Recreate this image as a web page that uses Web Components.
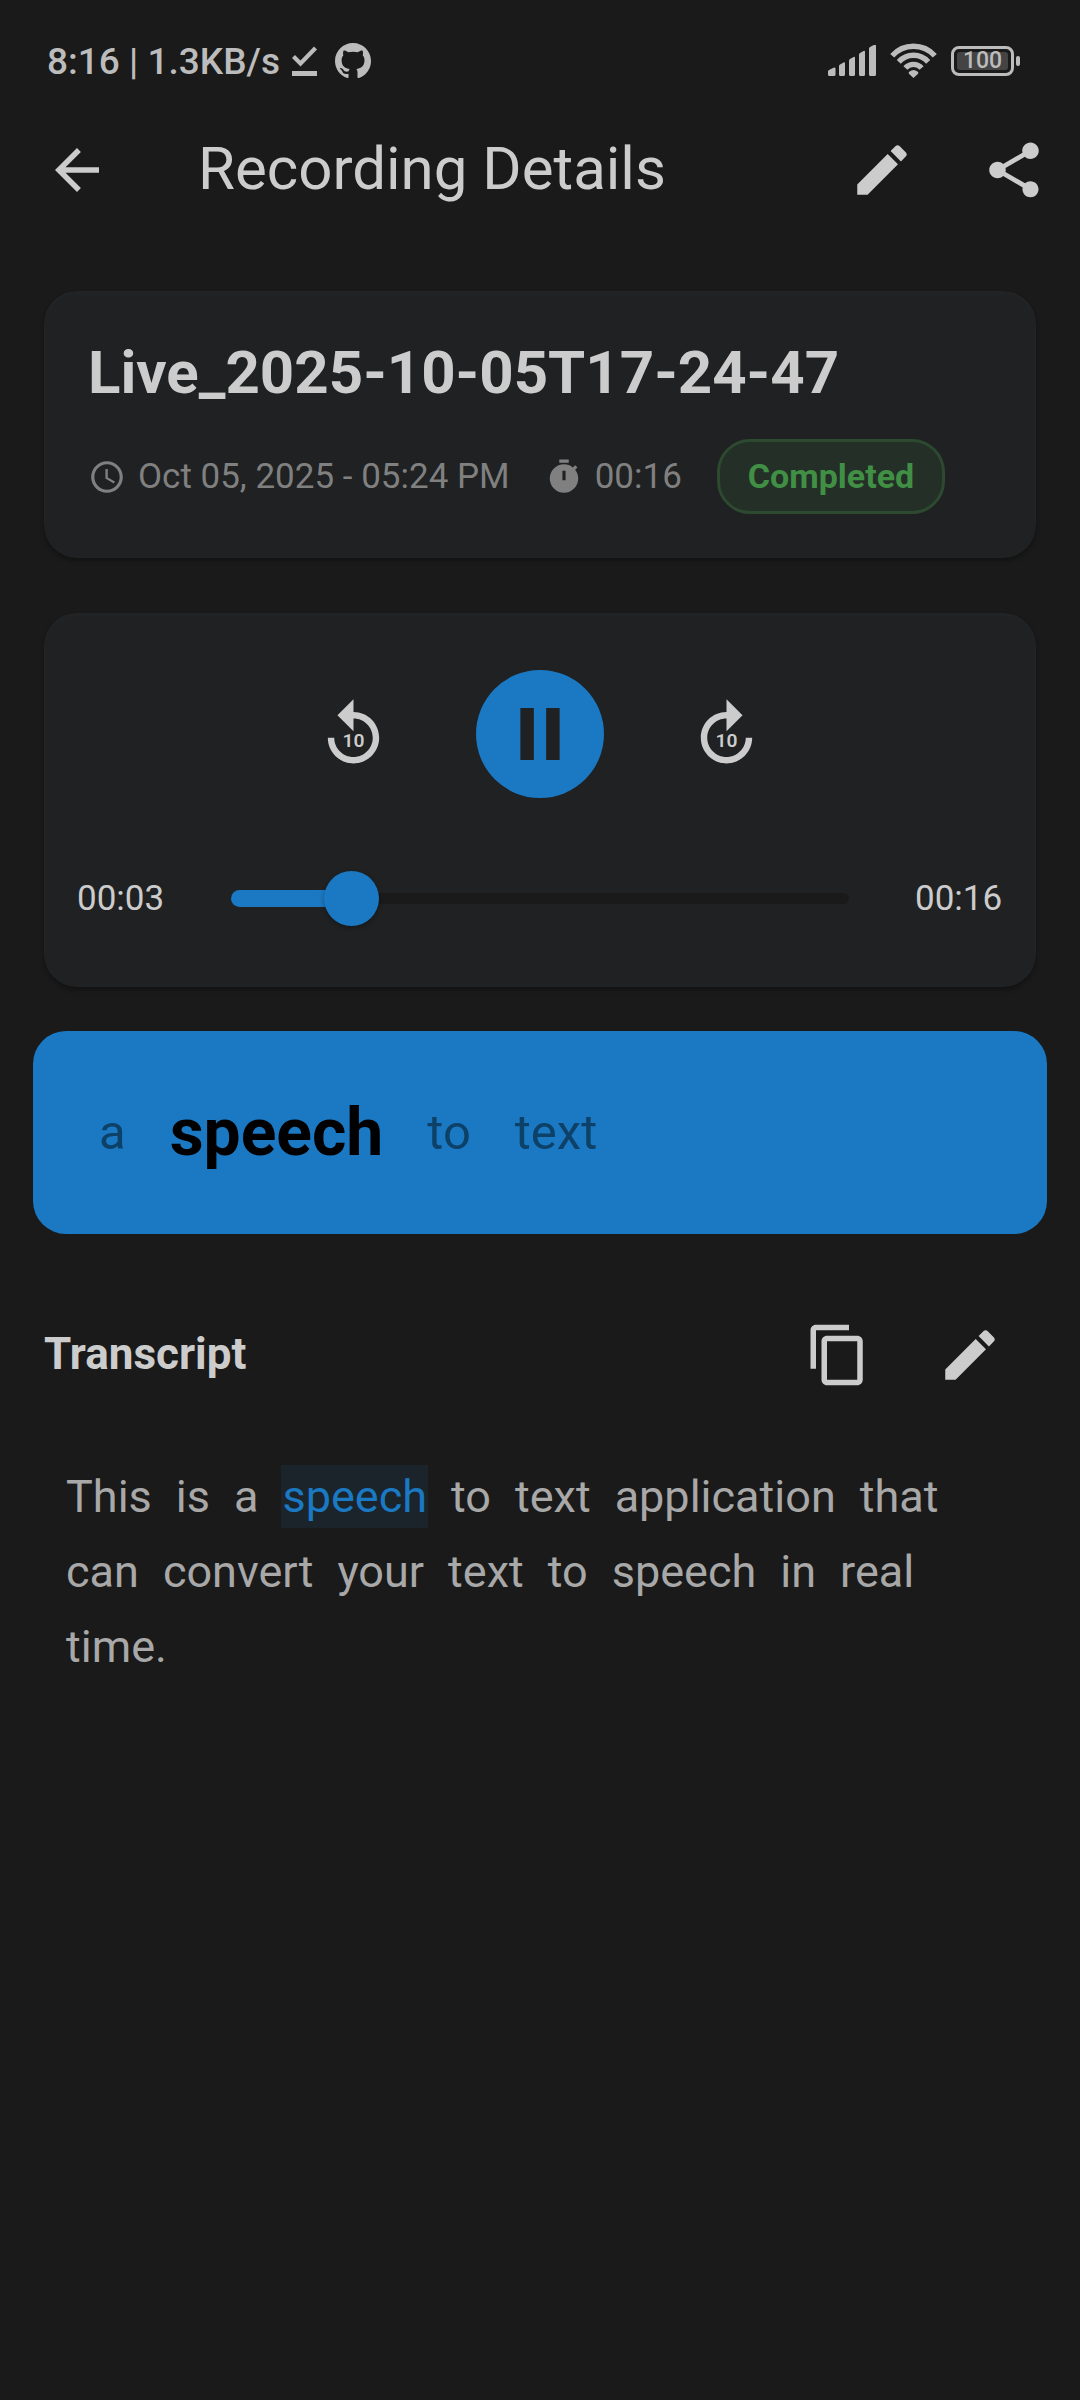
<!DOCTYPE html>
<html lang="en">
<head>
<meta charset="utf-8">
<meta name="viewport" content="width=device-width, initial-scale=1">
<title>Recording Details</title>
<style>
  :root {
    --bg: #1a1a1a;
    --surface: #1f2122;
    --accent: #1b78c2;
    --text: #cccccc;
    --muted: #808080;
  }
  body {
    margin: 0;
    min-height: 100vh;
    background: var(--bg);
    color: var(--text);
    font-family: Roboto, "Liberation Sans", sans-serif;
  }
</style>
</head>
<body>
<recording-page></recording-page>

<script>
const define = (name, html, setup) => {
  const template = document.createElement('template');
  template.innerHTML = html;
  customElements.define(name, class extends HTMLElement {
    connectedCallback() {
      if (this.shadowRoot) return;
      this.attachShadow({ mode: 'open' }).append(template.content.cloneNode(true));
      if (setup) setup(this, this.shadowRoot);
    }
  });
};

const ICONS = {
  back: '<path d="M20 11H7.83l5.59-5.59L12 4l-8 8 8 8 1.41-1.41L7.83 13H20v-2z"/>',
  edit: '<path d="M3 17.25V21h3.75L17.81 9.94l-3.75-3.75L3 17.25zM20.71 7.04c.39-.39.39-1.02 0-1.41l-2.34-2.34c-.39-.39-1.02-.39-1.41 0l-1.83 1.83 3.75 3.75 1.83-1.83z"/>',
  share: '<path d="M18 16.08c-.76 0-1.44.3-1.96.77L8.91 12.7c.05-.23.09-.46.09-.7s-.04-.47-.09-.7l7.05-4.11c.54.5 1.25.81 2.04.81 1.66 0 3-1.34 3-3s-1.34-3-3-3-3 1.34-3 3c0 .24.04.47.09.7L8.04 9.81C7.5 9.31 6.79 9 6 9c-1.66 0-3 1.34-3 3s1.34 3 3 3c.79 0 1.5-.31 2.04-.81l7.12 4.16c-.05.21-.08.43-.08.65 0 1.61 1.31 2.92 2.92 2.92s2.92-1.31 2.92-2.92-1.31-2.92-2.92-2.92z"/>',
  copy: '<path d="M16 1H4c-1.1 0-2 .9-2 2v14h2V3h12V1zm3 4H8c-1.1 0-2 .9-2 2v14c0 1.1.9 2 2 2h11c1.1 0 2-.9 2-2V7c0-1.1-.9-2-2-2zm0 16H8V7h11v14z"/>',
  clock: '<path d="M11.99 2C6.47 2 2 6.48 2 12s4.47 10 9.99 10C17.52 22 22 17.52 22 12S17.52 2 11.99 2zM12 20c-4.42 0-8-3.58-8-8s3.58-8 8-8 8 3.58 8 8-3.58 8-8 8z"/><path d="M12.5 7H11v6l5.25 3.15.75-1.23-4.5-2.67z"/>',
  timer: '<path fill-rule="evenodd" d="M15 1H9v2h6V1zm-4 13h2V8h-2v6zm8.03-6.61l1.42-1.42c-.43-.51-.9-.99-1.41-1.41l-1.42 1.42C16.07 4.74 14.12 4 12 4c-4.97 0-9 4.03-9 9s4.02 9 9 9 9-4.03 9-9c0-2.12-.74-4.07-1.97-5.61z"/>',
  pause: '<path d="M6.650 19.100h3.670V4.900H6.650v14.200zM13.680 4.900v14.200h3.670V4.900h-3.670z"/>',
  replay: '<path d="M12 5V1L7 6l5 5V7c3.31 0 6 2.69 6 6s-2.69 6-6 6-6-2.69-6-6H4c0 4.42 3.58 8 8 8s8-3.58 8-8-3.58-8-8-8z"/><text x="12" y="16" font-size="6" font-weight="600" text-anchor="middle">10</text>',
  forward: '<path d="M12 5V1l5 5-5 5V7c-3.31 0-6 2.69-6 6s2.69 6 6 6 6-2.69 6-6h2c0 4.42-3.58 8-8 8s-8-3.58-8-8 3.58-8 8-8z"/><text x="12" y="16" font-size="6" font-weight="600" text-anchor="middle">10</text>'
};

define('app-icon', `
  <style>
    :host { display: block; flex: none; width: var(--icon-size, 66px); height: var(--icon-size, 66px); }
    svg { display: block; width: 100%; height: 100%; fill: currentColor; }
  </style>
  <svg viewBox="0 0 24 24" aria-hidden="true"></svg>
`, (host, root) => { root.querySelector('svg').innerHTML = ICONS[host.getAttribute('name')]; });

define('icon-button', `
  <style>
    :host { display: block; flex: none; }
    button {
      display: grid; place-items: center;
      width: var(--button-size, 132px); height: var(--button-size, 132px);
      margin: 0; padding: 0; border: 0; border-radius: 50%;
      background: var(--button-bg, transparent); color: inherit; font: inherit; cursor: pointer;
    }
  </style>
  <button type="button"><slot></slot></button>
`, (host, root) => root.querySelector('button').setAttribute('aria-label', host.getAttribute('label')));

define('status-bar', `
  <style>
    :host {
      display: flex; align-items: center; justify-content: space-between;
      height: 65px; padding: 28px 60px 0 47px;
      box-sizing: content-box; color: #bcbcbc;
      font-size: 37px; line-height: 44px; font-weight: 500;
    }
    div { display: flex; align-items: center; }
    .left { gap: 12px; }
    .left span { padding-top: 2px; }
    .right { gap: 14px; }
    svg { display: block; fill: currentColor; }
    .battery { display: flex; align-items: center; gap: 2px; }
    .cell {
      box-sizing: border-box; width: 63px; height: 30px; padding: 3px;
      border: 3px solid currentColor; border-radius: 8px;
    }
    .charge {
      flex: 1; height: 18px; justify-content: center; border-radius: 3px;
      background: #444; font-size: 23px; line-height: 18px;
    }
    .nub { width: 4px; height: 10px; border-radius: 2px; background: currentColor; }
  </style>
  <div class="left">
    <span>8:16 | 1.3KB/s</span>
    <svg width="31" height="30" viewBox="0 0 31 30" aria-hidden="true">
      <path d="M1.5 10.5 8.5 17.5 23.5 2" fill="none" stroke="currentColor" stroke-width="4.2"/>
      <path d="M0 25h25v5H0z"/>
    </svg>
    <svg width="36" height="36" viewBox="0 0 16 16" aria-hidden="true">
      <path d="M8 0C3.58 0 0 3.58 0 8c0 3.54 2.29 6.53 5.47 7.59.4.07.55-.17.55-.38 0-.19-.01-.82-.01-1.49-2.01.37-2.53-.49-2.69-.94-.09-.23-.48-.94-.82-1.13-.28-.15-.68-.52-.01-.53.63-.01 1.08.58 1.23.82.72 1.21 1.87.87 2.33.66.07-.52.28-.87.51-1.07-1.78-.2-3.64-.89-3.64-3.95 0-.87.31-1.59.82-2.15-.08-.2-.36-1.02.08-2.12 0 0 .67-.21 2.2.82.64-.18 1.32-.27 2-.27s1.36.09 2 .27c1.53-1.04 2.2-.82 2.2-.82.44 1.1.16 1.92.08 2.12.51.56.82 1.27.82 2.15 0 3.07-1.87 3.75-3.65 3.95.29.25.54.73.54 1.48 0 1.07-.01 1.93-.01 2.2 0 .21.15.46.55.38A8.01 8.01 0 0 0 16 8c0-4.42-3.58-8-8-8"/>
    </svg>
  </div>
  <div class="right">
    <svg width="48" height="31" viewBox="0 0 48 31" aria-hidden="true">
      <path d="M0 26.5q0-1 1-1.6l4.5-2.2q2-.6 2 1V29.500q0 1.500-1.500 1.500H1.500Q0 31 0 29.500zM11 21q0-1 1-1.600l3.500-2q1.500-.6 1.500 1V29.500q0 1.500-1.500 1.500h-3Q11 31 11 29.500zM21 15.500q0-1 1-1.600l3.500-2q1.500-.6 1.500 1V29.500q0 1.500-1.500 1.500h-3Q21 31 21 29.500zM31 9.500q0-1 1-1.600l3.500-2q1.500-.6 1.500 1V29.500q0 1.500-1.500 1.500h-3Q31 31 31 29.500zM41 3.500q0-1 1-1.600l4-2q2-.6 2 1V29.500q0 1.500-1.500 1.500h-4Q41 31 41 29.500z"/>
    </svg>
    <svg width="47" height="35" viewBox="0 0 47 35" aria-hidden="true">
      <g fill="none" stroke="currentColor" stroke-width="5.4">
        <path d="M2.200 12.800A28.600 28.600 0 0 1 44.800 12.800"/>
        <path d="M8.800 18.900A19.600 19.600 0 0 1 38.200 18.900"/>
        <path d="M15.400 25A10.800 10.800 0 0 1 31.600 25"/>
      </g>
      <path d="M23.500 35l-4.600-4.200q-.8-1.400.6-2.400 4-3 8 0 1.400 1 .6 2.400z"/>
    </svg>
    <div class="battery">
      <div class="cell"><div class="charge">100</div></div>
      <div class="nub"></div>
    </div>
  </div>
`);

define('app-bar', `
  <style>
    :host { display: flex; align-items: center; height: 154px; padding-left: 11px; }
    h1 { flex: 1; margin: 0 0 0 55px; padding-bottom: 3px; font-size: 60px; line-height: 77px; font-weight: 400; }
  </style>
  <icon-button label="Back"><app-icon name="back"></app-icon></icon-button>
  <h1><slot></slot></h1>
  <icon-button label="Edit"><app-icon name="edit"></app-icon></icon-button>
  <icon-button label="Share"><app-icon name="share"></app-icon></icon-button>
`);

define('surface-card', `
  <style>
    :host {
      display: block; border-radius: 33px; background: var(--surface);
      box-shadow: 0 3px 4px rgba(0,0,0,.3), inset 0 3px 6px rgba(255,255,255,.02), inset 0 0 4px rgba(255,255,255,.02);
    }
  </style>
  <slot></slot>
`);

define('recording-info', `
  <style>
    :host { display: block; padding: 44px; }
    h2 { margin: 0 0 29px; font-size: 60px; line-height: 75px; font-weight: 700; }
    .meta { display: flex; align-items: center; gap: 35px; color: var(--muted); font-size: 35px; line-height: 44px; }
    .item { display: flex; align-items: center; gap: 12px; --icon-size: 38px; }
    .chip {
      padding: 13px 28px; border: 3px solid #2d4a31; border-radius: 33px;
      background: #232f27; color: #418f45; font-size: 34px; font-weight: 700; line-height: 43px;
    }
  </style>
  <h2>Live_2025-10-05T17-24-47</h2>
  <div class="meta">
    <div class="item"><app-icon name="clock"></app-icon><span>Oct 05, 2025 - 05:24 PM</span></div>
    <div class="item"><app-icon name="timer"></app-icon><span>00:16</span></div>
    <div class="chip">Completed</div>
  </div>
`);

define('seek-slider', `
  <style>
    :host { display: grid; flex: 1; align-items: center; min-width: 0; }
    .rail, .fill, input { grid-area: 1 / 1; }
    .rail { height: 11px; border-radius: 6px; background: var(--bg); }
    .fill { height: 17px; width: 20%; border-radius: 9px; background: var(--accent); }
    input {
      appearance: none; width: 100%; height: 55px; margin: 0; background: transparent; cursor: pointer;
    }
    input::-webkit-slider-thumb {
      appearance: none; width: 55px; height: 55px; border-radius: 50%;
      background: var(--accent); box-shadow: 0 2px 5px rgba(0,0,0,.3);
    }
  </style>
  <div class="rail"></div>
  <div class="fill"></div>
  <input type="range" aria-label="Playback position" min="0" max="1000" value="166">
`, (host, root) => {
  const input = root.querySelector('input');
  const fill = root.querySelector('.fill');
  input.addEventListener('input', () => { fill.style.width = input.value / 10 + '%'; });
});

define('audio-player', `
  <style>
    :host { display: block; padding: 57px 33px 61px; }
    .controls { display: flex; align-items: center; justify-content: center; gap: 84px; margin-bottom: 73px; }
    .skip { --button-size: 77px; --icon-size: 77px; }
    .play { --button-size: 128px; --icon-size: 88px; --button-bg: var(--accent); color: var(--surface); }
    .seek { display: flex; align-items: center; gap: 66px; font-size: 35px; line-height: 44px; }
    .time { width: 88px; }
  </style>
  <div class="controls">
    <icon-button class="skip" label="Back 10 seconds"><app-icon name="replay"></app-icon></icon-button>
    <icon-button class="play" label="Pause"><app-icon name="pause"></app-icon></icon-button>
    <icon-button class="skip" label="Forward 10 seconds"><app-icon name="forward"></app-icon></icon-button>
  </div>
  <div class="seek">
    <span class="time">00:03</span>
    <seek-slider></seek-slider>
    <span class="time">00:16</span>
  </div>
`);

define('live-caption', `
  <style>
    :host {
      display: flex; align-items: center; gap: 44px; height: 203px;
      box-sizing: border-box; padding: 0 66px; border-radius: 33px;
      background: var(--accent); color: #0d4168; font-size: 49px; line-height: 66px;
    }
    strong { color: #000; font-size: 66px; font-weight: 700; }
  </style>
  <span>a</span><strong>speech</strong><span>to</span><span>text</span>
`);

define('transcript-header', `
  <style>
    :host { display: flex; align-items: center; }
    h2 { flex: 1; margin: 0; padding-bottom: 3px; font-size: 44px; line-height: 66px; font-weight: 700; }
  </style>
  <h2><slot></slot></h2>
  <icon-button label="Copy transcript"><app-icon name="copy"></app-icon></icon-button>
  <icon-button label="Edit transcript"><app-icon name="edit"></app-icon></icon-button>
`);

define('transcript-text', `
  <style>
    :host { display: block; padding: 38px 22px; color: #a8a8a8; font-size: 45px; line-height: 75px; }
    p { display: flex; flex-wrap: wrap; column-gap: 24px; margin: 0; }
    mark { padding: 5px 1px; margin: 0 -1px; background: #1a242a; color: var(--accent); }
  </style>
  <p>
    <span>This</span> <span>is</span> <span>a</span> <span><mark>speech</mark></span> <span>to</span>
    <span>text</span> <span>application</span> <span>that</span> <span>can</span> <span>convert</span>
    <span>your</span> <span>text</span> <span>to</span> <span>speech</span> <span>in</span>
    <span>real</span> <span>time.</span>
  </p>
`);

define('recording-page', `
  <style>
    :host { display: block; }
    main { display: flex; flex-direction: column; padding: 44px; }
    .player { margin-top: 55px; }
    live-caption { margin: 44px -11px 55px; }
  </style>
  <status-bar></status-bar>
  <app-bar>Recording Details</app-bar>
  <main>
    <surface-card><recording-info></recording-info></surface-card>
    <surface-card class="player"><audio-player></audio-player></surface-card>
    <live-caption></live-caption>
    <transcript-header>Transcript</transcript-header>
    <transcript-text></transcript-text>
  </main>
`);
</script>
</body>
</html>
